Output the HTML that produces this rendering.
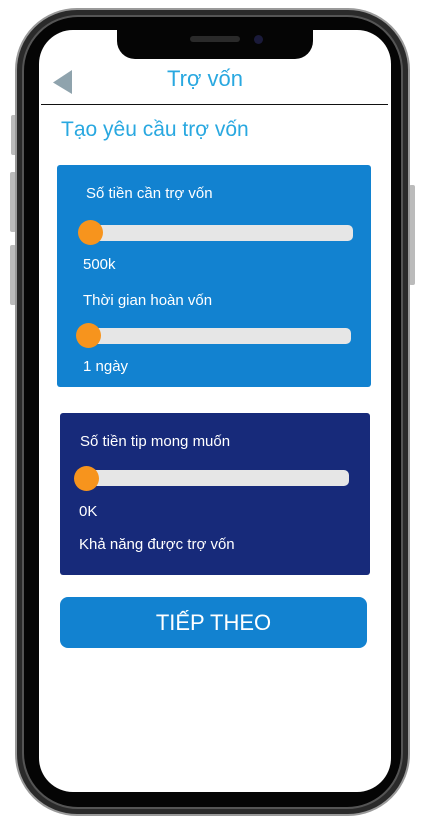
<!DOCTYPE html>
<html><head><meta charset="utf-8"><style>
*{margin:0;padding:0;box-sizing:border-box}
body{width:424px;height:826px;background:#fff;position:relative;overflow:hidden;font-family:"Liberation Sans","DejaVu Sans",sans-serif}
.abs{position:absolute}
.t{position:absolute;color:#fff;font-size:15px;white-space:nowrap}
.track{position:absolute;background:#e6e6e6;border-radius:5px}
.thumb{position:absolute;width:25px;height:25px;border-radius:50%;background:#f7941d}
</style></head><body>
<div class="abs" style="left:11px;top:115px;width:6px;height:40px;background:#bbb;border-radius:2px"></div>
<div class="abs" style="left:10px;top:172px;width:6px;height:60px;background:#bbb;border-radius:2px"></div>
<div class="abs" style="left:10px;top:245px;width:6px;height:60px;background:#bbb;border-radius:2px"></div>
<div class="abs" style="left:409px;top:185px;width:6px;height:100px;background:#bbb;border-radius:2px"></div>
<div class="abs" style="left:15px;top:8px;width:395px;height:808px;border-radius:62px;background:#2a2a2a;border:2px solid #9a9a9a"></div>
<div class="abs" style="left:22px;top:15px;width:381px;height:794px;border-radius:56px;background:#050505;border:2px solid #555"></div>
<div class="abs" style="left:39px;top:30px;width:352px;height:762px;border-radius:34px;background:#fff"></div>
<div class="abs" style="left:117px;top:28px;width:196px;height:31px;background:#050505;border-radius:0 0 18px 18px"></div>
<div class="abs" style="left:190px;top:36px;width:50px;height:6px;background:#2a2a2a;border-radius:3px"></div>
<div class="abs" style="left:254px;top:35px;width:9px;height:9px;background:#1a1a3a;border-radius:50%"></div>
<svg class="abs" style="left:53px;top:70px" width="20" height="25"><polygon points="0,12.5 19,0 19,24" fill="#8fa3ad"/></svg>
<div class="abs" style="left:0;width:410px;top:66px;text-align:center;color:#29a8e0;font-size:22px">Trợ vốn</div>
<div class="abs" style="left:41px;top:104px;width:347px;height:1px;background:#111"></div>
<div class="abs" style="left:61px;top:118px;color:#29a8e0;font-size:21px">Tạo yêu cầu trợ vốn</div>
<div class="abs" style="left:57px;top:165px;width:314px;height:222px;background:#1282d0;border-radius:3px"></div>
<div class="t" style="left:86px;top:185px">Số tiền cần trợ vốn</div>
<div class="track" style="left:80px;top:225px;width:273px;height:16px"></div>
<div class="thumb" style="left:78px;top:220px"></div>
<div class="t" style="left:83px;top:256px">500k</div>
<div class="t" style="left:83px;top:292px">Thời gian hoàn vốn</div>
<div class="track" style="left:80px;top:328px;width:271px;height:16px"></div>
<div class="thumb" style="left:76px;top:323px"></div>
<div class="t" style="left:83px;top:358px">1 ngày</div>
<div class="abs" style="left:60px;top:413px;width:310px;height:162px;background:#172a7a;border-radius:3px"></div>
<div class="t" style="left:80px;top:433px">Số tiền tip mong muốn</div>
<div class="track" style="left:76px;top:470px;width:273px;height:16px"></div>
<div class="thumb" style="left:74px;top:466px"></div>
<div class="t" style="left:79px;top:503px">0K</div>
<div class="t" style="left:79px;top:536px">Khả năng được trợ vốn</div>
<div class="abs" style="left:60px;top:597px;width:307px;height:51px;background:#1282d0;border-radius:8px;color:#fff;font-size:22px;text-align:center;line-height:51px">TIẾP THEO</div>
</body></html>
